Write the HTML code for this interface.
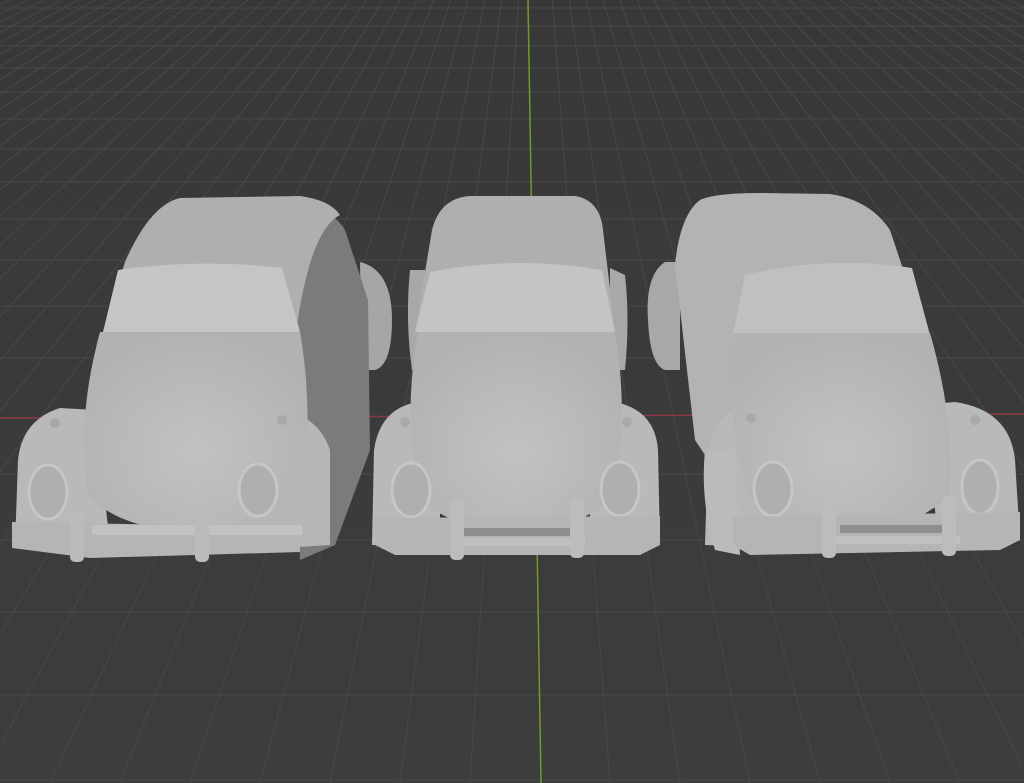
<!DOCTYPE html>
<html><head><style>
html,body{margin:0;padding:0;background:#3b3b3b;width:1024px;height:783px;overflow:hidden}
svg{display:block}
</style></head><body>
<svg width="1024" height="783" viewBox="0 0 1024 783" xmlns="http://www.w3.org/2000/svg">
<defs>
<linearGradient id="bg" x1="0" y1="0" x2="0" y2="1"><stop offset="0" stop-color="#383838"/><stop offset="1" stop-color="#3d3d3d"/></linearGradient>
<radialGradient id="hood" cx="0.5" cy="0.6" r="0.6"><stop offset="0" stop-color="#c2c2c2"/><stop offset="1" stop-color="#b2b2b2"/></radialGradient>
</defs>
<rect width="1024" height="783" fill="url(#bg)"/>
<g stroke="#484848" stroke-width="1" fill="none">
<path d="M534 -250L-1700 783M534 -250L-1630 783M534 -250L-1560 783M534 -250L-1490 783M534 -250L-1420 783M534 -250L-1350 783M534 -250L-1280 783M534 -250L-1210 783M534 -250L-1140 783M534 -250L-1070 783M534 -250L-1000 783M534 -250L-930 783M534 -250L-860 783M534 -250L-790 783M534 -250L-720 783M534 -250L-650 783M534 -250L-580 783M534 -250L-510 783M534 -250L-440 783M534 -250L-370 783M534 -250L-300 783M534 -250L-230 783M534 -250L-160 783M534 -250L-90 783M534 -250L-20 783M534 -250L50 783M534 -250L120 783M534 -250L190 783M534 -250L260 783M534 -250L330 783M534 -250L400 783M534 -250L470 783M534 -250L610 783M534 -250L680 783M534 -250L750 783M534 -250L820 783M534 -250L890 783M534 -250L960 783M534 -250L1030 783M534 -250L1100 783M534 -250L1170 783M534 -250L1240 783M534 -250L1310 783M534 -250L1380 783M534 -250L1450 783M534 -250L1520 783M534 -250L1590 783M534 -250L1660 783M534 -250L1730 783M534 -250L1800 783M534 -250L1870 783M534 -250L1940 783M534 -250L2010 783M534 -250L2080 783M534 -250L2150 783M534 -250L2220 783M534 -250L2290 783M534 -250L2360 783M534 -250L2430 783M534 -250L2500 783M534 -250L2570 783M534 -250L2640 783M534 -250L2710 783M534 -250L2780 783"/>
<path d="M0 8H1024M0 26H1024M0 46H1024M0 68H1024M0 92H1024M0 119H1024M0 149H1024M0 182H1024M0 219H1024M0 260H1024M0 306H1024M0 358H1024M0 474H1024M0 540H1024M0 612H1024M0 695H1024M0 780H1024"/>
</g>
<line x1="0" y1="418" x2="1024" y2="414" stroke="#8a3a47" stroke-width="1.5"/>
<line x1="528" y1="0" x2="541" y2="783" stroke="#6f9a2c" stroke-width="1.5"/>

<!-- CAR 1 -->
<g>
<path d="M360 262Q392 270 392 320Q392 365 375 370L362 370Z" fill="#a6a6a6"/>
<path d="M300 215Q330 205 345 230L368 300L370 450L335 545L300 560L290 330Z" fill="#7d7a7a"/>
<path d="M103 332L125 262Q150 205 180 198L300 196Q330 200 340 215Q310 230 296 332Z" fill="#afafaf"/>
<path d="M103 332L118 270Q200 258 282 268L300 332Z" fill="#c5c5c5"/>
<path d="M15 545L18 460Q22 420 60 408L95 410L110 545Z" fill="#b9b9b9"/>
<path d="M230 420L280 410Q318 415 330 450L330 545L250 550Z" fill="#b6b6b6"/>
<path d="M100 332L300 332Q315 420 300 495Q270 530 195 532Q120 530 88 495Q76 420 100 332Z" fill="url(#hood)"/>
<ellipse cx="48" cy="492" rx="19" ry="27" fill="#afafaf" stroke="#c6c6c6" stroke-width="3"/>
<ellipse cx="258" cy="490" rx="19" ry="26" fill="#afafaf" stroke="#c6c6c6" stroke-width="3"/>
<path d="M12 522L300 527L300 552L90 558L12 548Z" fill="#b5b5b5"/>
<rect x="92" y="525" width="210" height="10" fill="#c2c2c2"/>
<rect x="70" y="512" width="14" height="50" rx="5" fill="#bbbbbb"/>
<rect x="195" y="500" width="14" height="62" rx="5" fill="#bbbbbb"/>
<circle cx="55" cy="423" r="5" fill="#a9a9a9"/><circle cx="282" cy="420" r="5" fill="#a9a9a9"/>
</g>

<!-- CAR 2 -->
<g>
<path d="M410 270Q405 320 412 370L425 370L425 270Z" fill="#a8a8a8"/>
<path d="M610 268L625 275Q630 320 625 370L610 370Z" fill="#a8a8a8"/>
<path d="M415 332L432 230Q440 198 470 196L575 196Q600 200 603 230L615 332Z" fill="#afafaf"/>
<path d="M415 332L430 272Q515 255 602 270L615 332Z" fill="#c4c4c4"/>
<path d="M372 545L374 450Q380 408 418 402L440 404L440 545Z" fill="#b9b9b9"/>
<path d="M590 404L615 402Q655 410 658 450L660 545L590 545Z" fill="#b9b9b9"/>
<path d="M418 332L615 332Q630 420 612 500Q570 532 515 532Q460 532 420 500Q402 420 418 332Z" fill="url(#hood)"/>
<ellipse cx="411" cy="490" rx="19" ry="27" fill="#afafaf" stroke="#c6c6c6" stroke-width="3"/>
<ellipse cx="620" cy="489" rx="19" ry="27" fill="#afafaf" stroke="#c6c6c6" stroke-width="3"/>
<path d="M375 518L660 516L660 545L640 555L395 555L375 545Z" fill="#b5b5b5"/>
<rect x="460" y="528" width="120" height="8" fill="#8e8e8e"/>
<rect x="455" y="538" width="130" height="8" fill="#c0c0c0"/>
<rect x="450" y="500" width="14" height="60" rx="5" fill="#bcbcbc"/>
<rect x="570" y="498" width="14" height="60" rx="5" fill="#bcbcbc"/>
<circle cx="405" cy="422" r="5" fill="#a9a9a9"/><circle cx="627" cy="422" r="5" fill="#a9a9a9"/>
</g>

<!-- CAR 3 -->
<g>
<path d="M665 262Q645 275 648 320Q650 365 665 370L680 370L680 262Z" fill="#a8a8a8"/>
<path d="M675 265Q680 215 700 200Q715 193 760 193L830 194Q870 200 890 230L910 290L705 455L695 440Z" fill="#b3b3b3"/>
<path d="M733 335L745 275Q830 255 912 268L930 335Z" fill="#c0c0c0"/>
<path d="M705 545L708 450Q715 410 750 405L770 405L770 548Z" fill="#b8b8b8"/>
<path d="M920 405L955 402Q1010 410 1015 460L1020 540L940 545Z" fill="#b9b9b9"/>
<path d="M733 333L930 333Q955 420 950 495Q910 532 850 532Q790 532 750 500Q725 420 733 333Z" fill="url(#hood)"/>
<path d="M705 450Q700 500 715 550L740 555L735 450Z" fill="#bbbbbb"/>
<ellipse cx="773" cy="489" rx="19" ry="27" fill="#afafaf" stroke="#c6c6c6" stroke-width="3"/>
<ellipse cx="980" cy="487" rx="18" ry="27" fill="#afafaf" stroke="#c6c6c6" stroke-width="3"/>
<path d="M733 517L1020 512L1020 540L1000 550L750 555L733 545Z" fill="#b5b5b5"/>
<rect x="840" y="525" width="110" height="8" fill="#8e8e8e"/>
<rect x="830" y="536" width="130" height="8" fill="#c0c0c0"/>
<rect x="822" y="498" width="14" height="60" rx="5" fill="#bcbcbc"/>
<rect x="942" y="496" width="14" height="60" rx="5" fill="#bcbcbc"/>
<circle cx="751" cy="418" r="5" fill="#a9a9a9"/><circle cx="975" cy="420" r="5" fill="#a9a9a9"/>
</g>
</svg>
</body></html>
